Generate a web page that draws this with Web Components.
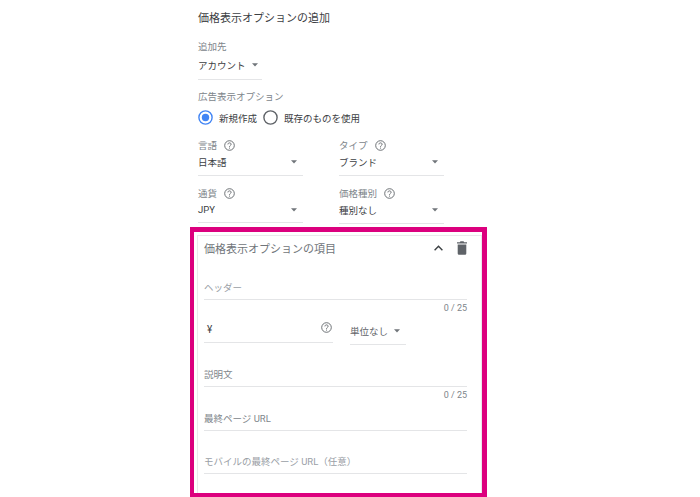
<!DOCTYPE html>
<html lang="ja">
<head>
<meta charset="utf-8">
<style>
html, body { margin: 0; background: #fff; }
body { width: 700px; height: 497px; overflow: hidden; font-family: Roboto, "Noto Sans CJK JP", sans-serif; color: #3c4043; }
page-form { margin-left: 198px; }
</style>
</head>
<body>
<page-form></page-form>
<script>
const caret = '<svg width="6" height="4" viewBox="0 0 6 4"><path d="M0 .3h6L3 3.600z" fill="#70757a"/></svg>';

class HelpIcon extends HTMLElement {
    constructor() {
        super();
        this.attachShadow({ mode: 'open' });
        this.shadowRoot.innerHTML = `
        <style>:host { display: inline-flex; width: 11px; height: 11px; }</style>
        <svg width="11" height="11" viewBox="0 0 11 11" fill="none" stroke="#5f6368">
            <circle cx="5.5" cy="5.5" r="4.8" stroke-width=".9"/>
            <path d="M3.9 4.4c0-2 3.2-2 3.2-.1 0 1.2-1.6 1.2-1.6 2.5" stroke-width=".9"/>
            <path d="M5.5 7.6v1" stroke-width=".9"/>
        </svg>`;
    }
}

// ラベル + 選択値 + 下線
class SelectField extends HTMLElement {
    constructor() {
        super();
        this.attachShadow({ mode: 'open' });
        const help = this.hasAttribute('help') ? '<help-icon></help-icon>' : '';
        this.shadowRoot.innerHTML = `
        <style>
            :host { display: block; width: 105px; }
            .label { display: flex; align-items: center; gap: 7px; height: 16px; font-size: 9.5px; color: #80868b; }
            .value { display: flex; align-items: center; justify-content: space-between; height: var(--value-h, 18px); font-size: 9.5px; color: #3c4043; padding-right: 6px; }
            .line { height: 1px; background: #e4e5e7; margin-top: var(--gap, 4px); }
        </style>
        <div class="label"><span>${this.getAttribute('label')}</span>${help}</div>
        <div class="value"><span>${this.getAttribute('value')}</span>${caret}</div>
        <div class="line"></div>`;
    }
}

class RadioButton extends HTMLElement {
    constructor() {
        super();
        this.attachShadow({ mode: 'open' });
        const on = this.hasAttribute('checked');
        this.shadowRoot.innerHTML = `
        <style>
            :host { display: inline-flex; align-items: center; gap: 6px; font-size: 9.5px; color: #3c4043; }
        </style>
        <svg width="15" height="15" viewBox="0 0 15 15">
            <circle cx="7.5" cy="7.5" r="6.6" fill="none" stroke="${on ? '#4285f4' : '#5f6368'}" stroke-width="1.4"/>
            ${on ? '<circle cx="7.5" cy="7.5" r="3.7" fill="#4285f4"/>' : ''}
        </svg>
        <slot></slot>`;
    }
}

class TextField extends HTMLElement {
    constructor() {
        super();
        this.attachShadow({ mode: 'open' });
        const max = this.getAttribute('max');
        this.shadowRoot.innerHTML = `
        <style>
            :host { display: block; }
            .text { font-size: 9.5px; line-height: 14px; padding-top: 1px; color: var(--text, #80868b); }
            .line { height: 1px; background: #e4e5e7; margin-top: 4px; }
            .count { font-size: 9px; line-height: 12px; margin-top: 2px; text-align: right; color: #80868b; }
        </style>
        <div class="text">${this.getAttribute('label')}</div>
        <div class="line"></div>
        ${max ? `<div class="count">0 / ${max}</div>` : ''}`;
    }
}

class PriceCard extends HTMLElement {
    constructor() {
        super();
        this.attachShadow({ mode: 'open' });
        this.shadowRoot.innerHTML = `
        <style>
            :host { display: block; box-sizing: border-box; width: 297px; height: 270px; margin-left: -8px; border: solid #dc007e; border-width: 5px 5px 4px 4px; background: #fff; padding: 3px 0 0 3px; }
            .card { box-sizing: border-box; height: 100%; border: 1px solid #e8e9eb; border-bottom: 0; padding: 0 14px 0 6px; }
            .head { display: flex; align-items: center; justify-content: space-between; height: 24px; font-size: 11px; color: #70757a; }
            .tools { display: flex; align-items: center; gap: 14px; }
            .amount { display: flex; align-items: flex-start; gap: 17px; margin-top: 6px; }
            .yen { box-sizing: border-box; width: 129px; height: 23px; border-bottom: 1px solid #e4e5e7; display: flex; justify-content: space-between; padding: 3px 1px 0 3px; font-size: 10px; line-height: 14px; color: #3c4043; }
            .yen help-icon { margin-top: -1px; }
            .unit { box-sizing: border-box; width: 56px; height: 25px; border-bottom: 1px solid #e4e5e7; display: flex; align-items: center; gap: 6px; font-size: 9.5px; color: #5f6368; padding-bottom: 3px; }
            text-field { margin-top: var(--top); }
        </style>
        <div class="card">
            <div class="head">
                <span>価格表示オプションの項目</span>
                <span class="tools">
                    <svg width="9" height="6" viewBox="0 0 9 6"><path d="M.6 5.200l3.900-3.900 3.900 3.900" fill="none" stroke="#3c4043" stroke-width="1.4"/></svg>
                    <svg width="10" height="14" viewBox="0 0 10 14"><path d="M.7 3.500h8.600V12.500a1.300 1.300 0 0 1-1.300 1.300H2A1.300 1.300 0 0 1 .7 12.500zM0 1.300h2.800L3.500.3h3l.7 1H10v1.200H0z" fill="#5f6368"/></svg>
                </span>
            </div>
            <text-field label="ヘッダー" max="25" style="--top:20px;--text:#9aa0a6"></text-field>
            <div class="amount">
                <div class="yen"><span>¥</span><help-icon></help-icon></div>
                <div class="unit"><span>単位なし</span>${caret}</div>
            </div>
            <text-field label="説明文" max="25" style="--top:22px"></text-field>
            <text-field label="最終ページ URL" style="--top:10px"></text-field>
            <text-field label="モバイルの最終ページ URL（任意）" style="--top:23px;--text:#9aa0a6"></text-field>
        </div>`;
    }
}

class PageForm extends HTMLElement {
    constructor() {
        super();
        this.attachShadow({ mode: 'open' });
        this.shadowRoot.innerHTML = `
        <style>
            :host { display: block; width: 300px; padding-top: 10px; }
            h1 { margin: 0; font-size: 11px; line-height: 17px; font-weight: 400; color: #3c4043; }
            .small { font-size: 9.5px; color: #80868b; line-height: 14px; }
            .dest { width: 64px; }
            .dest-value { display: flex; align-items: center; gap: 6px; font-size: 9.5px; height: 20px; margin-top: 1px; white-space: nowrap; }
            .dest-line { height: 1px; background: #e4e5e7; margin-top: 4px; }
            .grid { display: grid; grid-template-columns: 105px 105px; column-gap: 36px; margin-top: 12px; }
            .radios { display: flex; align-items: center; gap: 6px; margin-top: 6px; }
            .second { margin-top: 9px; --value-h: 17px; }
        </style>
        <h1>価格表示オプションの追加</h1>
        <div class="small" style="margin-top:13px">追加先</div>
        <div class="dest">
            <div class="dest-value">アカウント ${caret}</div>
            <div class="dest-line"></div>
        </div>
        <div class="small" style="margin-top:10px">広告表示オプション</div>
        <div class="radios">
            <radio-button checked>新規作成</radio-button>
            <radio-button>既存のものを使用</radio-button>
        </div>
        <div class="grid">
            <select-field label="言語" value="日本語" help></select-field>
            <select-field label="タイプ" value="ブランド" help></select-field>
            <select-field class="second" label="通貨" value="JPY" help></select-field>
            <select-field class="second" label="価格種別" value="種別なし" help style="--gap:5px"></select-field>
        </div>
        <price-card style="margin-top:3px"></price-card>`;
    }
}

customElements.define('help-icon', HelpIcon);
customElements.define('select-field', SelectField);
customElements.define('radio-button', RadioButton);
customElements.define('text-field', TextField);
customElements.define('price-card', PriceCard);
customElements.define('page-form', PageForm);
</script>
</body>
</html>
